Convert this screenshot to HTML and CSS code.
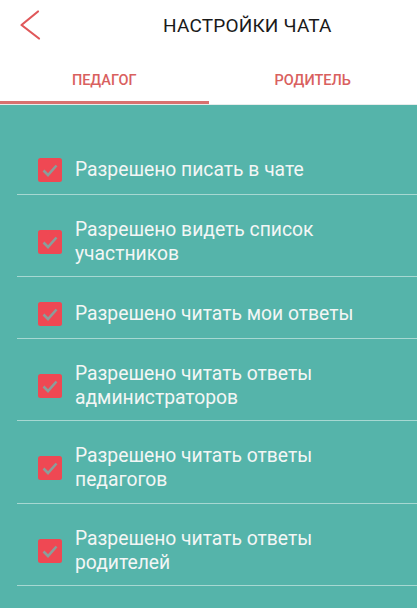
FILE: index.html
```html
<!DOCTYPE html>
<html lang="ru">
<head>
<meta charset="utf-8">
<link rel="stylesheet" href="styles.css">
</head>
<body>
<div class="app">
  <header class="topbar">
    <button class="back" aria-label="Назад">
      <svg width="24" height="32" viewBox="0 0 24 32"><path d="M19 2.5 L2.5 16 L20 29.5" fill="none" stroke="#e0585a" stroke-width="2.2" stroke-linecap="round" stroke-linejoin="round"/></svg>
    </button>
    <h1 class="title">НАСТРОЙКИ ЧАТА</h1>
  </header>
  <nav class="tabs">
    <div class="tab active">ПЕДАГОГ</div>
    <div class="tab">РОДИТЕЛЬ</div>
  </nav>
  <main class="list">
    <label class="row"><span class="check"><svg viewBox="0 0 24 24" width="24" height="24"><path d="M5.5 12.5 L10 17 L18.5 7.5" fill="none" stroke="#8a9e9b" stroke-width="2.6"/></svg></span><span class="text">Разрешено писать в чате</span></label>
    <label class="row"><span class="check"><svg viewBox="0 0 24 24" width="24" height="24"><path d="M5.5 12.5 L10 17 L18.5 7.5" fill="none" stroke="#8a9e9b" stroke-width="2.6"/></svg></span><span class="text">Разрешено видеть список<br>участников</span></label>
    <label class="row"><span class="check"><svg viewBox="0 0 24 24" width="24" height="24"><path d="M5.5 12.5 L10 17 L18.5 7.5" fill="none" stroke="#8a9e9b" stroke-width="2.6"/></svg></span><span class="text">Разрешено читать мои ответы</span></label>
    <label class="row"><span class="check"><svg viewBox="0 0 24 24" width="24" height="24"><path d="M5.5 12.5 L10 17 L18.5 7.5" fill="none" stroke="#8a9e9b" stroke-width="2.6"/></svg></span><span class="text">Разрешено читать ответы<br>администраторов</span></label>
    <label class="row"><span class="check"><svg viewBox="0 0 24 24" width="24" height="24"><path d="M5.5 12.5 L10 17 L18.5 7.5" fill="none" stroke="#8a9e9b" stroke-width="2.6"/></svg></span><span class="text">Разрешено читать ответы<br>педагогов</span></label>
    <label class="row"><span class="check"><svg viewBox="0 0 24 24" width="24" height="24"><path d="M5.5 12.5 L10 17 L18.5 7.5" fill="none" stroke="#8a9e9b" stroke-width="2.6"/></svg></span><span class="text">Разрешено читать ответы<br>родителей</span></label>
  </main>
</div>
</body>
</html>
```
FILE: styles.css
```css
* { box-sizing: border-box; }
html, body { margin: 0; padding: 0; }
body {
  width: 417px;
  height: 608px;
  overflow: hidden;
  font-family: Roboto, "Noto Sans", sans-serif;
  background: #55b4aa;
}
.app { display: flex; flex-direction: column; height: 608px; }
.topbar {
  height: 50px;
  background: #fff;
  display: flex;
  align-items: center;
}
.back {
  border: 0;
  background: none;
  padding: 0;
  margin-left: 19px;
  width: 24px;
  height: 32px;
  display: flex;
}
.title {
  margin: 0 0 0 120px;
  font-weight: 400;
  font-size: 19px;
  color: #1a1a1a;
  letter-spacing: 0.2px;
}
.tabs {
  display: flex;
  background: #fff;
  height: 55px;
  border-bottom: 1px solid #e6eceb;
}
.tab {
  flex: 1;
  display: flex;
  align-items: center;
  justify-content: center;
  font-size: 14.5px;
  font-weight: 500;
  color: #d9605e;
  padding-top: 10px;
  border-bottom: 3px solid transparent;
}
.tab.active { border-bottom-color: #d9716f; }
.list {
  flex: 1;
  padding-top: 28px;
}
.row {
  display: flex;
  align-items: center;
  margin-left: 17px;
  padding: 23.25px 0 10.25px 21px;
  border-bottom: 1.5px solid #a7d8d2;
}
.check {
  flex: none;
  width: 24px;
  height: 24px;
  border-radius: 2.5px;
  background: #ef4853;
  margin: 1.5px 13px 1.5px 0;
  display: flex;
}
.text {
  font-size: 19.3px;
  line-height: 24px;
  color: #f3f6f5;
}
```
